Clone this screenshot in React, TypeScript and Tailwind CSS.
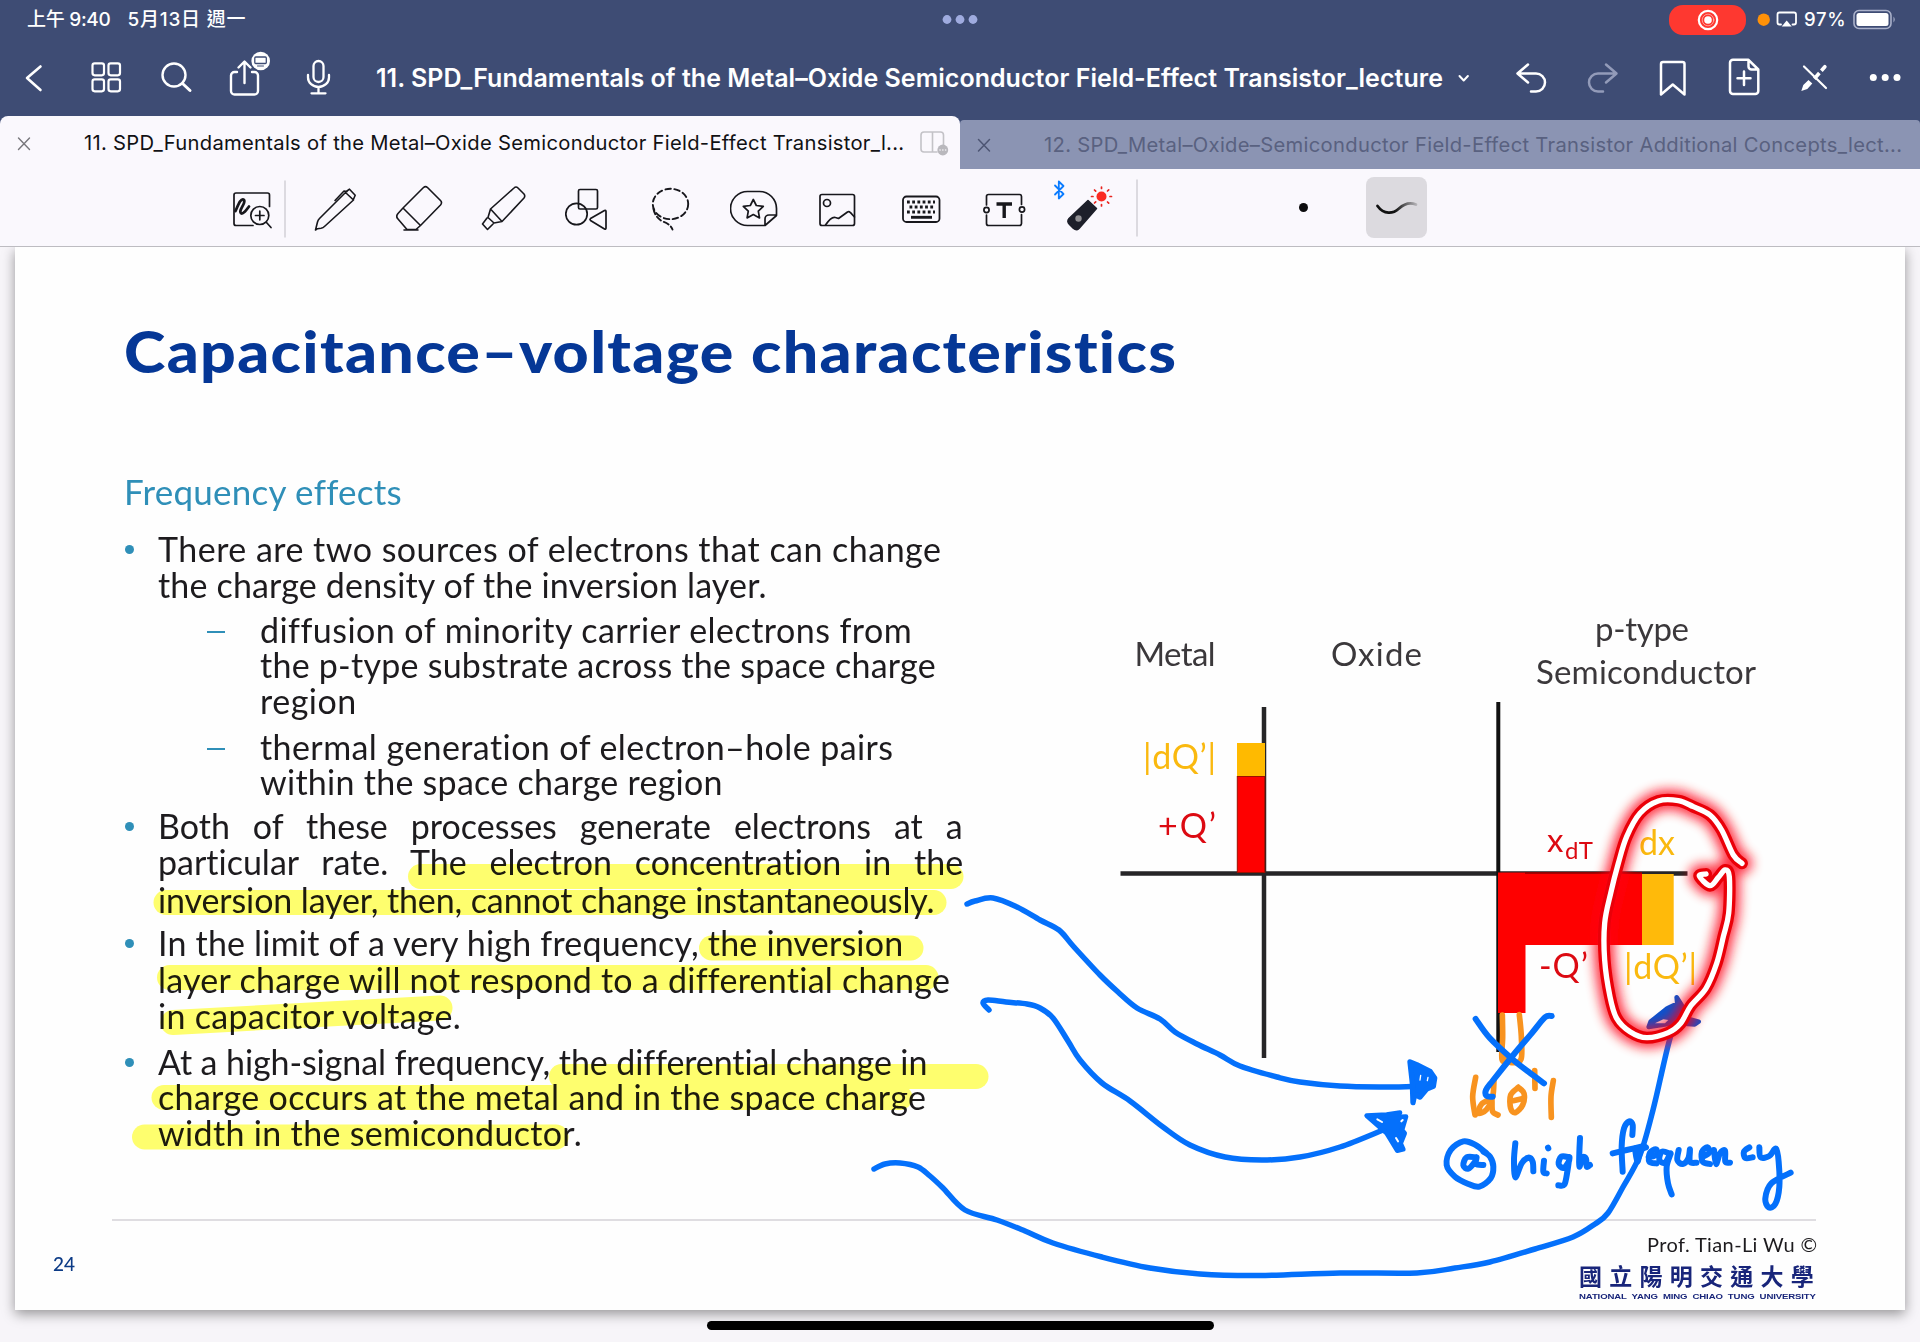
import { useLayoutEffect, useRef, type ReactNode } from "react";

/** One line of text whose tracking is adjusted so that it fills `w` pixels. */
function Fit({ w, text, by = "letter", className = "" }: { w: number; text: string; by?: "letter" | "word"; className?: string }) {
  const ref = useRef<HTMLSpanElement>(null);
  useLayoutEffect(() => {
    const el = ref.current;
    if (!el) return;
    el.style.letterSpacing = "0px";
    el.style.wordSpacing = "0px";
    const rest = w - el.offsetWidth;
    if (by === "word") el.style.wordSpacing = `${rest / (text.split(" ").length - 1)}px`;
    else el.style.letterSpacing = `${rest / text.length}px`;
  }, [w, text, by]);
  return (
    <span ref={ref} className={`inline-block whitespace-pre [font-variant-ligatures:none] ${className}`}>
      {text}
    </span>
  );
}

/** Icon cell: the view box is given in page coordinates. */
function Cell({ x, y, w, h, sw = 2, children }: { x: number; y: number; w: number; h: number; sw?: number; children: ReactNode }) {
  return (
    <svg className="block shrink-0" width={w} height={h} viewBox={`${x} ${y} ${w} ${h}`} fill="none" stroke="currentColor" strokeWidth={sw} strokeLinecap="round" strokeLinejoin="round">
      {children}
    </svg>
  );
}

/** Smooth curve through a list of points. */
function curve(p: number[]): string {
  const n = p.length / 2;
  const at = (i: number) => {
    const k = Math.max(0, Math.min(n - 1, i));
    return [p[k * 2], p[k * 2 + 1]];
  };
  let d = `M${p[0]} ${p[1]}`;
  for (let i = 0; i < n - 1; i++) {
    const [a, b, c, e] = [at(i - 1), at(i), at(i + 1), at(i + 2)];
    d += `C${b[0] + (c[0] - a[0]) / 6} ${b[1] + (c[1] - a[1]) / 6} ${c[0] - (e[0] - b[0]) / 6} ${c[1] - (e[1] - b[1]) / 6} ${c[0]} ${c[1]}`;
  }
  return d;
}

function StatusBar() {
  return (
    <div className="flex h-[39px] items-center text-white">
      <div className="ml-[27px] flex w-[906px] gap-[17px] text-[19px] leading-none font-medium font-[Inter,'Noto_Sans_CJK_TC',sans-serif]">
        <Fit w={84} text="上午 9:40" />
        <Fit w={119} text="5月13日 週一" />
      </div>
      <Cell x={933} y={0} w={54} h={39}>
        <g fill="#9fabdf" stroke="none">
          <circle cx="947" cy="19.5" r="4.4" />
          <circle cx="960" cy="19.5" r="4.4" />
          <circle cx="973" cy="19.5" r="4.4" />
        </g>
      </Cell>
      <div className="ml-[682px] flex h-[30px] w-[77px] items-center justify-center rounded-[14px] bg-[#fe3830]">
        <Cell x={0} y={0} w={22} h={22} sw={2.2}>
          <circle cx="11" cy="11" r="9.2" />
          <circle cx="11" cy="11" r="3.8" fill="white" stroke="none" />
          <circle cx="11" cy="11" r="5.8" strokeWidth="0.8" opacity="0.6" />
        </Cell>
      </div>
      <Cell x={1746} y={0} w={58} h={39} sw={1.8}>
        <circle cx="1763.7" cy="19.7" r="6.2" fill="#ff9108" stroke="none" />
        <path d="M1781 24.5h-1.5a2 2 0 0 1-2-2v-8a2 2 0 0 1 2-2h14.500a2 2 0 0 1 2 2v8a2 2 0 0 1-2 2h-1.500" />
        <path d="M1786.700 20.500l5 6h-10z" fill="white" stroke="none" />
      </Cell>
      <Fit w={42} text="97%" className="text-[18.500px] leading-none font-medium font-[Inter,sans-serif]" />
      <Cell x={1846} y={0} w={60} h={39} sw={1.6}>
        <rect x="1854" y="10.500" width="37" height="18" rx="5" stroke="#aab1ca" />
        <rect x="1856.500" y="13" width="32" height="13" rx="2.500" fill="white" stroke="none" />
        <path d="M1893.500 16.500q2.500 3 0 6z" fill="#aab1ca" stroke="none" />
      </Cell>
    </div>
  );
}

function NavBar() {
  return (
    <div className="flex h-[77px] text-white">
      <Cell x={0} y={39} w={376} h={77} sw={2.6}>
        <path d="M40.500 66.500L27 78l13.500 12" />
        <g strokeWidth="2.200">
          <rect x="92.500" y="63.300" width="11.500" height="12" rx="2.200" />
          <rect x="108.500" y="63.300" width="11.500" height="12" rx="2.200" />
          <rect x="92.500" y="79.300" width="11.500" height="12" rx="2.200" />
          <rect x="108.500" y="79.300" width="11.500" height="12" rx="2.200" />
        </g>
        <circle cx="174" cy="75" r="11.500" strokeWidth="2.400" />
        <path d="M182.500 83.500l7.500 7" strokeWidth="3" />
        <g strokeWidth="2.400">
          <path d="M237 72h-2.500a3.500 3.500 0 0 0-3.500 3.500v15.500a3.500 3.500 0 0 0 3.500 3.500h20a3.500 3.500 0 0 0 3.500-3.500v-15.500a3.500 3.500 0 0 0-3.500-3.500h-2.500" />
          <path d="M244.500 83v-21M238.500 67.500l6-6 6 6" />
        </g>
        <circle cx="260.700" cy="61" r="9.300" fill="white" stroke="none" />
        <rect x="254.800" y="57" width="11.500" height="6.500" rx="1" stroke="#3e4c74" strokeWidth="1.300" />
        <path d="M257.500 66h6" stroke="#3e4c74" strokeWidth="1" />
        <g strokeWidth="2.300">
          <rect x="313.500" y="61" width="10" height="21" rx="5" />
          <path d="M308 75v2.500a10.500 9.500 0 0 0 21 0v-2.500M318.500 87.500v5.500M311.500 93.300h14" />
        </g>
      </Cell>
      <div className="w-[1072px] pt-[22px] text-[25px] leading-[34px] font-semibold font-[Inter,sans-serif]">
        <Fit w={1067} text="11. SPD_Fundamentals of the Metal–Oxide Semiconductor Field-Effect Transistor_lecture" />
      </div>
      <Cell x={1448} y={39} w={472} h={77} sw={2.500}>
        <path d="M1459.500 76l4.200 4.500 4.200-4.500" strokeWidth="2" />
        <path d="M1528 64.500l-10.500 9 10.500 9M1518 73.500h18a9 9 0 0 1 0 18h-5" />
        <path d="M1606 64.500l10.500 9-10.500 9M1616 73.500h-18a9 9 0 0 0 0 18h5" stroke="#939bb9" />
        <path d="M1661 64a2 2 0 0 1 2-2h19.500a2 2 0 0 1 2 2v30.500l-11.750-10-11.750 10z" />
        <path d="M1733 59.800h15.500l9.800 9.700v21.500a3 3 0 0 1-3 3h-22.300a3 3 0 0 1-3-3v-28.200a3 3 0 0 1 3-3zM1748.500 60v6.500a3 3 0 0 0 3 3h6.500" />
        <path d="M1744 71.500v13.500M1737.500 78.300h13" />
        <path d="M1804 66.500l22 21.500" strokeWidth="2.200" />
        <path d="M1820 69.500l3.500-4a1.800 1.800 0 0 1 2.700 2.500l-3.500 4zM1813 77.500l5-5.800 2.700 2.500-5 5.800zM1808.500 80l3.800 3.500-5 5.500-6 2 2-6z" fill="white" stroke="none" />
        <g fill="white" stroke="none">
          <circle cx="1873.300" cy="77.500" r="3.500" />
          <circle cx="1885.200" cy="77.500" r="3.500" />
          <circle cx="1897" cy="77.500" r="3.500" />
        </g>
      </Cell>
    </div>
  );
}

function Tabs() {
  return (
    <div className="flex h-[53px] items-end font-[Inter,sans-serif] text-[20.200px] leading-[28px]">
      <div className="flex h-[53px] w-[960px] items-center rounded-t-[8px] bg-[#faf8fd] text-[#111114]">
        <Cell x={0} y={116} w={84} h={53} sw={1.400}>
          <path d="M18.500 138l11 11.500M29.500 138l-11 11.500" stroke="#77767b" />
        </Cell>
        <Fit w={820} text="11. SPD_Fundamentals of the Metal–Oxide Semiconductor Field-Effect Transistor_l..." />
        <Cell x={904} y={116} w={56} h={53} sw={1.600}>
          <path d="M937 152h-13a3 3 0 0 1-3-3v-14a3 3 0 0 1 3-3h16.500a3 3 0 0 1 3 3v10M932.500 132v20" stroke="#c3c2c7" />
          <circle cx="942.800" cy="150" r="5.400" fill="#b9b8bd" stroke="none" />
          <path d="M940 150h.1M942.800 150h.1M945.600 150h.1" stroke="#f4f3f7" />
        </Cell>
      </div>
      <div className="flex h-[49px] w-[960px] items-center rounded-t-[4px] bg-[#8b94b3] text-[#596180]">
        <Cell x={960} y={120} w={84} h={49} sw={1.500}>
          <path d="M978.500 139.500l11 11.500M989.500 139.500l-11 11.500" stroke="#4d5573" />
        </Cell>
        <Fit w={858} text="12. SPD_Metal–Oxide–Semiconductor Field-Effect Transistor Additional Concepts_lect..." />
      </div>
    </div>
  );
}

function Toolbar() {
  return (
    <div className="flex h-[78px] items-center border-b border-[#bdbcc1] bg-[#faf8fd] pl-[225px] text-[#17171c]">
      <Cell x={225} y={169} w={89} h={77} sw={1.700}>
        <path d="M269.500 206.500v-11.500a2 2 0 0 0-2-2h-31.500a2 2 0 0 0-2 2v28.500a2 2 0 0 0 2 2h17" />
        <path d={curve([235.500, 211, 240, 201.500, 243.500, 199.500, 244, 203, 240.500, 210.500, 241.500, 213.500, 245, 211.500, 249, 206.500])} strokeWidth="2.800" />
        <circle cx="259.800" cy="215.500" r="9" />
        <path d="M255.500 215.500h8.500M259.800 211.200v8.600M266.500 222.500l4.500 5" />
        <path d="M285 181v56" stroke="#d2d1d6" strokeWidth="1.500" />
      </Cell>
      <Cell x={314} y={169} w={82} h={77} sw={1.600}>
        <path d="M315.500 230l2-8q.5-2 2-3.500L345.500 192.500l8 7.500L325 226q-2 2-4 2.300l-3.500.4zM347 191l2.500-1.800 5.700 6-1.500 3.500M335 200.500l9-9.500 3 .5" />
      </Cell>
      <Cell x={396} y={169} w={85} h={77} sw={1.600}>
        <path d="M403 208l20.500-20.500q2-1.800 4 0l13 13q2 2 0 4.500L420.500 225.500zM403 208l-5 5.500q-2.500 3 0 5.500l9 10.500h9l4.500-4M404 230h14" />
      </Cell>
      <Cell x={481} y={169} w={84} h={77} sw={1.600}>
        <path d="M490.500 209L514 188q2-2 4 0l6 6q1.500 2 0 4L502 221.500zM490.500 209l-2.500 8.500 6 5.500 8-1.500M487 218l-4.500 6 5 5.500 5.500-5.500" />
      </Cell>
      <Cell x={565} y={169} w={84} h={77} sw={1.700}>
        <rect x="578.500" y="189.500" width="19" height="19.500" rx="1.500" />
        <circle cx="576.500" cy="214" r="10.700" />
        <path d="M590.500 218.500l14-8q1.500-.5 1.500 1v16.500q0 1.500-1.500 1l-14-8.500q-1-1 0-2z" />
      </Cell>
      <Cell x={649} y={169} w={81} h={77} sw={1.900}>
        <ellipse cx="670.500" cy="204" rx="17.700" ry="15.200" strokeDasharray="5.500 3.500" />
        <path d="M653.500 209q1.500 8 9 12.500 8 2.500 10 8" strokeDasharray="5.500 3" />
      </Cell>
      <Cell x={730} y={169} w={89} h={77} sw={1.700}>
        <path d="M765 225.500h-17.500a17 17 0 0 1-17-17 17 17 0 0 1 17-17h12a17 17 0 0 1 17 17v7zM765 225.500v-6.500a4 4 0 0 1 4-4h7.500" />
        <path d="M753.300 199.500l3 6 7 .9-5 4.800 1.200 6.700-6.200-3.300-6.200 3.300 1.200-6.700-5-4.800 7-.9z" />
      </Cell>
      <Cell x={819} y={169} w={83} h={77} sw={1.700}>
        <rect x="820" y="194.500" width="34.500" height="31" rx="2" />
        <circle cx="827" cy="203" r="3.500" />
        <path d="M825.500 225q6-9 10-7.500l3 1 9-6.500q1.500-1 3 .7l4 4.300" />
      </Cell>
      <Cell x={902} y={169} w={81} h={77} sw={1.800}>
        <rect x="903" y="196.500" width="36.500" height="25.500" rx="3.500" />
        <path d="M907 202h28M909.500 207h24M907 212h28" strokeWidth="2.800" strokeDasharray="2.800 2.400" strokeLinecap="butt" />
        <path d="M911 217.300h21" strokeWidth="2.900" strokeLinecap="butt" />
      </Cell>
      <Cell x={983} y={169} w={70} h={77} sw={1.700}>
        <path d="M986.500 205v-8.500a2 2 0 0 1 2-2h31a2 2 0 0 1 2 2v8M986.500 215v8.500a2 2 0 0 0 2 2h31a2 2 0 0 0 2-2v-9" />
        <circle cx="986.500" cy="210" r="2.600" />
        <circle cx="1022" cy="209.500" r="2.600" />
        <path d="M996.500 204h15.500M1004.200 204v14" strokeWidth="3.400" strokeLinecap="butt" />
      </Cell>
      <Cell x={1053} y={169} w={90} h={77}>
        <path d="M1055 185.500l8.500 8.500-4.700 4.500v-17l4.700 4.500-8.500 8.500" stroke="#0a7cff" strokeWidth="1.800" />
        <path d="M1088 200.500l8.500 8-17.500 20q-2.500 2.500-5.500 0l-4-4q-3-3-.5-6z" fill="#1d1f2a" stroke="#1d1f2a" strokeWidth="1.500" />
        <circle cx="1078.500" cy="218.500" r="3.200" fill="#908f93" stroke="none" />
        <circle cx="1101.500" cy="196.500" r="5" fill="#fb2a22" stroke="none" />
        <path d="M1101.500 187v1.500M1101.500 204.500v1.500M1091.500 196.500h1.500M1110 196.500h1.500M1094.500 190l1.200 1.200M1107.500 202l1.200 1.200M1094.500 203l1.200-1.200M1107.500 191l1.200-1.200" stroke="#e8241f" strokeWidth="1.700" />
        <path d="M1137 180v56" stroke="#d2d1d6" strokeWidth="1.500" />
      </Cell>
      <div className="ml-[156px] size-[9px] rounded-full bg-[#0c0c0e]" />
      <div className="ml-[58px] flex h-[61px] w-[61px] items-center justify-center rounded-[8px] bg-[#dcdadf]">
        <svg width="44" height="18" viewBox="0 0 44 18" fill="none">
          <defs>
            <linearGradient id="fade" x1="0" x2="44" y1="0" y2="0" gradientUnits="userSpaceOnUse">
              <stop offset="0.450" stopColor="#111" />
              <stop offset="1" stopColor="#111" stopOpacity="0.100" />
            </linearGradient>
          </defs>
          <path d="M2.500 7C9 16 18 15 24 9.500S35 3 41 5.500" stroke="url(#fade)" strokeWidth="2.800" strokeLinecap="round" />
        </svg>
      </div>
    </div>
  );
}

type Row = { text: string; w: number; box: string; mark?: "dot" | "dash"; sub?: boolean; by?: "word" };

const rows: Row[] = [
  { text: "There are two sources of electrons that can change", w: 783, box: "h-[36px]", mark: "dot" },
  { text: "the charge density of the inversion layer.", w: 609, box: "h-[45px]" },
  { text: "diffusion of minority carrier electrons from", w: 652, box: "h-[35px]", mark: "dash", sub: true },
  { text: "the p-type substrate across the space charge", w: 676, box: "h-[36px]", sub: true },
  { text: "region", w: 97, box: "h-[46px]", sub: true },
  { text: "thermal generation of electron–hole pairs", w: 633, box: "h-[35px]", mark: "dash", sub: true },
  { text: "within the space charge region", w: 463, box: "h-[44px]", sub: true },
  { text: "Both of these processes generate electrons at a", w: 805, box: "h-[36px]", mark: "dot", by: "word" },
  { text: "particular rate. The electron concentration in the", w: 805, box: "h-[38px]", by: "word" },
  { text: "inversion layer, then, cannot change instantaneously.", w: 776, box: "h-[43px]" },
  { text: "In the limit of a very high frequency, the inversion", w: 745, box: "h-[37px]", mark: "dot" },
  { text: "layer charge will not respond to a differential change", w: 792, box: "h-[36px]" },
  { text: "in capacitor voltage.", w: 303, box: "h-[46px]" },
  { text: "At a high-signal frequency, the differential change in", w: 769, box: "h-[35px]", mark: "dot" },
  { text: "charge occurs at the metal and in the space charge", w: 768, box: "h-[36px]" },
  { text: "width in the semiconductor.", w: 424, box: "h-[36px]" },
];

function Body() {
  return (
    <div className="mt-[19px] text-[34px] leading-[35px] text-[#1d1b1e]">
      {rows.map((r) => (
        <div key={r.text} className={`flex ${r.box}`}>
          <div className={`flex h-[35px] shrink-0 items-center ${r.sub ? "w-[136px] pl-[83px]" : "w-[34px]"}`}>
            {r.mark === "dot" && <div className="mt-[2px] ml-px size-[9px] rounded-full bg-[#2f8fb8]" />}
            {r.mark === "dash" && <div className="mt-[5px] h-[2px] w-[18px] bg-[#2f8fb8]" />}
          </div>
          <Fit w={r.w} text={r.text} by={r.by} />
        </div>
      ))}
    </div>
  );
}

/** Charge distribution across the MOS structure. */
function Figure() {
  return (
    <svg className="block" width="700" height="480" viewBox="1100 600 700 480" fontFamily="Lato, sans-serif" fontSize="33">
      <g stroke="#262527" strokeWidth="4.500">
        <path d="M1264 707v351M1120.500 873.500h567" />
        <path d="M1498.300 702v350" stroke="#111" strokeWidth="4" />
      </g>
      <rect x="1237" y="743" width="28" height="33" fill="#ffba00" />
      <rect x="1237.300" y="776.500" width="27.500" height="96" fill="#fe0000" stroke="#9c1000" strokeWidth="1" />
      <path d="M1498 872.500h144v72.500h-116.500v68h-27.500z" fill="#fe0000" />
      <path d="M1525 873h117" stroke="#8d0000" strokeWidth="1.500" />
      <rect x="1642" y="874" width="31.700" height="71" fill="#ffba0a" />
      <g fill="#3b383b">
        <text x="1134.500" y="666" textLength="81">Metal</text>
        <text x="1331" y="666" textLength="91">Oxide</text>
        <text x="1595" y="641" textLength="94">p-type</text>
        <text x="1536" y="683.500" textLength="220">Semiconductor</text>
      </g>
      <g fill="#fab90f">
        <text x="1143" y="769" fontSize="34" textLength="73">|dQ’|</text>
        <text x="1639" y="855" fontSize="34" textLength="36">dx</text>
        <text x="1624" y="979" fontSize="34" textLength="73">|dQ’|</text>
      </g>
      <g fill="#dc0a12">
        <text x="1158" y="838" fontSize="34" textLength="58">+Q’</text>
        <text x="1547" y="852">x</text>
        <text x="1565" y="859" fontSize="24" textLength="28">dT</text>
        <text x="1539" y="978" fontSize="34" textLength="49">-Q’</text>
      </g>
    </svg>
  );
}

const strokes: number[][] = [
  [967, 904, 975, 901, 993, 898, 1017, 907, 1040, 920, 1059, 930, 1074, 947, 1100, 975, 1118, 992, 1137, 1008, 1160, 1019, 1175, 1032, 1197, 1044, 1220, 1055, 1240, 1066, 1277, 1077, 1300, 1082, 1340, 1086, 1380, 1087, 1412, 1086.5],
  [989, 1010, 983, 1003, 988, 1000, 1006, 1002, 1027, 1004, 1040, 1008, 1053, 1018, 1068, 1041, 1080, 1060, 1102, 1083, 1130, 1101, 1163, 1127, 1190, 1145, 1225, 1157, 1262, 1160, 1300, 1157, 1340, 1147, 1383, 1130],
  [874, 1169, 885, 1164, 900, 1163, 918, 1167, 930, 1176, 943, 1188, 965, 1210, 997, 1220, 1025, 1231, 1053, 1243, 1102, 1257, 1150, 1268, 1200, 1274, 1260, 1275.500, 1340, 1273, 1417, 1273, 1455, 1268, 1490, 1262, 1535, 1249, 1573, 1237, 1595, 1224, 1608, 1213, 1623, 1187, 1640, 1155, 1653, 1110, 1663, 1067, 1669, 1042, 1677, 1015],
];

const blueWriting: number[][] = [
  [407, 117, 450, 175, 520, 240, 565, 275, 612, 310],
  [635, 108, 615, 112, 575, 160, 520, 225, 460, 300, 438, 330, 440, 348, 458, 350],
  [440, 520, 405, 494, 370, 484, 332, 510, 320, 555, 345, 590, 385, 612, 418, 620, 452, 595, 460, 560, 450, 530, 430, 515],
  [408, 532, 380, 532, 370, 556, 385, 566, 405, 545, 410, 532, 408, 552, 430, 555],
  [526, 490, 522, 540, 526, 592, 545, 550, 565, 533, 578, 545, 580, 574],
  [612, 542, 610, 575, 620, 580],
  [624, 503, 625, 505],
  [688, 532, 664, 530, 656, 552, 670, 564, 686, 545, 688, 532, 682, 575, 673, 614, 655, 616],
  [720, 474, 718, 520, 718, 560, 728, 532, 738, 536, 740, 560, 750, 555],
  [877, 465, 878, 435, 868, 424, 852, 445, 845, 500, 848, 575],
  [818, 520, 860, 510, 912, 498],
  [885, 505, 892, 545, 902, 512, 918, 502],
  [926, 532, 950, 524, 948, 508, 930, 518, 928, 545, 950, 550],
  [992, 522, 966, 515, 958, 540, 975, 548, 992, 520, 980, 560, 984, 610, 995, 643],
  [1016, 510, 1012, 540, 1028, 552, 1045, 535, 1050, 508, 1050, 545, 1070, 548],
  [1088, 530, 1108, 518, 1102, 502, 1086, 515, 1088, 545, 1110, 552],
  [1122, 510, 1128, 552, 1140, 520, 1155, 512, 1156, 545, 1170, 548],
  [1228, 502, 1212, 515, 1216, 534, 1238, 532],
  [1258, 502, 1262, 532, 1288, 528, 1308, 506, 1316, 545, 1318, 620, 1306, 672, 1286, 682, 1276, 655, 1294, 610, 1352, 578],
];

const orangeWriting: number[][] = [
  [487, 105, 488, 170, 486, 238, 505, 244],
  [538, 104, 544, 170, 543, 238, 515, 248, 490, 236],
  [407, 292, 398, 350, 405, 405],
  [450, 358, 425, 372, 415, 400, 440, 388, 458, 350, 462, 300],
  [456, 365, 458, 395, 474, 405],
  [535, 322, 512, 345, 512, 385, 526, 398, 548, 375, 552, 340, 535, 322],
  [520, 362, 552, 355],
  [584, 272, 585, 325],
  [640, 302, 633, 350, 634, 412],
];

const laser = [876, 790, 850, 765, 815, 690, 780, 645, 730, 620, 685, 602, 625, 603, 570, 640, 530, 710, 505, 790, 482, 880, 464, 970, 464, 1080, 480, 1190, 500, 1255, 540, 1295, 590, 1313, 655, 1298, 692, 1270, 722, 1218, 768, 1165, 800, 1090, 820, 1010, 836, 940, 838, 830, 825, 810, 805, 832, 780, 857, 748, 828, 768, 822];

const highlights = [
  "M420.500 876.500H951", "M166 902.500H934", "M711.500 948H911", "M169.500 977.500H926",
  "M173 1022.500L440 1008", "M561.500 1076.500H976", "M164 1097.500H900", "M144.500 1137H556",
];

function Annotations() {
  return (
    <>
      <svg className="pointer-events-none absolute inset-0 mix-blend-multiply" width="1890" height="1063" viewBox="15 247 1890 1063" fill="none" stroke="#ffff6e" strokeWidth="25" strokeLinecap="round">
        {highlights.map((d) => (
          <path key={d} d={d} />
        ))}
      </svg>
      <svg className="pointer-events-none absolute inset-0" width="1890" height="1063" viewBox="15 247 1890 1063" fill="none" strokeLinecap="round" strokeLinejoin="round">
        <defs>
          <filter id="glow" x="-50%" y="-50%" width="200%" height="200%">
            <feGaussianBlur stdDeviation="18" />
          </filter>
        </defs>
        <g transform="translate(1340 980) scale(0.33333)" stroke="#f8931f" strokeWidth="17">
          {orangeWriting.map((p, i) => (
            <path key={i} d={curve(p)} />
          ))}
        </g>
        <g stroke="#0470fb" strokeWidth="5.500">
          {strokes.map((p, i) => (
            <path key={i} d={curve(p)} />
          ))}
        </g>
        <g transform="translate(1340 980) scale(0.33333)" stroke="#0470fb" strokeWidth="18">
          {blueWriting.map((p, i) => (
            <path key={i} d={curve(p)} />
          ))}
          <path d="M210 246l20 8 40 20 14 20-4 25-20 8-20 24-16-8-5 25-2-60z" fill="#0470fb" strokeWidth="16" />
          <path d="M240 300l2-14M262 302l2-10" stroke="#fefefe" strokeWidth="4" />
          <path d="M80 407l60-3 40-6-30 14 48-2-12 40 8 10-12 30 8 18-18 4-32-52z" fill="#0470fb" strokeWidth="14" />
          <path d="M112 418l14 8M184 424l4-4M168 474l6 10" stroke="#fefefe" strokeWidth="6" />
          <path d="M1010 52l18 28 10 35 38 10-12 8-60-4-78 12 6-16 50-40 30-14z" fill="#0b52cf" stroke="#0b52cf" strokeWidth="14" />
          <path d="M945 130l25-12 15 2-10 10z" fill="#f3dce6" stroke="none" />
        </g>
        <g transform="translate(1450 600) scale(0.33333)">
          <path d={curve(laser)} stroke="#ff0018" strokeWidth="62" opacity="0.800" filter="url(#glow)" />
          <path d={curve(laser)} stroke="#ea0008" strokeWidth="36" />
          <path d={curve(laser)} stroke="#fff" strokeWidth="16" />
        </g>
      </svg>
    </>
  );
}

function Slide() {
  return (
    <div className="relative mx-[15px] h-[1063px] bg-[#fefefe] font-[Lato,sans-serif] shadow-[0_4px_12px_rgba(0,0,0,0.400)]">
      <div className="flex">
        <div className="w-[1085px] shrink-0 pt-[72px] pl-[109px]">
          <h1 className="h-[64px] text-[57px] leading-[64px] font-black text-[#053796]">
            <Fit w={957} text="Capacitance–voltage characteristics" className="origin-left scale-x-110" />
          </h1>
          <h2 className="mt-[87px] h-[42px] text-[35px] leading-[42px] text-[#2f8fb8]">
            <Fit w={278} text="Frequency effects" />
          </h2>
          <Body />
        </div>
        <div className="pt-[353px]">
          <Figure />
        </div>
      </div>
      <div className="mt-[68px] ml-[97px] h-[2px] w-[1704px] bg-[#dfdde1]" />
      <div className="flex justify-between pr-[90px] pl-[38px]">
        <div className="pt-[32px] text-[19px] leading-[22px] font-medium text-[#0c3b86]">
          <Fit w={22} text="24" />
        </div>
        <div className="flex w-[236px] flex-col text-[#18257a]">
          <div className="h-[40px] pt-[10px] pl-[68px] text-[20px] leading-[26px] text-[#1d1b1e]">
            <Fit w={170} text="Prof. Tian-Li Wu ©" />
          </div>
          <div className="h-[29px] text-[23px] leading-[29px] font-bold font-['Noto_Sans_CJK_TC',sans-serif]">
            <Fit w={242} text="國立陽明交通大學" />
          </div>
          <div className="h-[12px] pt-[2px] text-[8px] leading-[10px] font-bold font-['Liberation_Sans',sans-serif]">
            <Fit w={197} text="NATIONAL  YANG  MING  CHIAO  TUNG  UNIVERSITY" className="origin-left scale-x-120" />
          </div>
        </div>
      </div>
      <Annotations />
    </div>
  );
}

export default function App() {
  return (
    <div className="flex h-[1342px] w-[1920px] flex-col overflow-hidden bg-[#f7f5f9]">
      <header className="relative z-10 bg-[#3e4c74]">
        <StatusBar />
        <NavBar />
        <Tabs />
        <Toolbar />
      </header>
      <Slide />
      <div className="mx-auto mt-[11px] h-[9px] w-[507px] rounded-full bg-black" />
    </div>
  );
}
